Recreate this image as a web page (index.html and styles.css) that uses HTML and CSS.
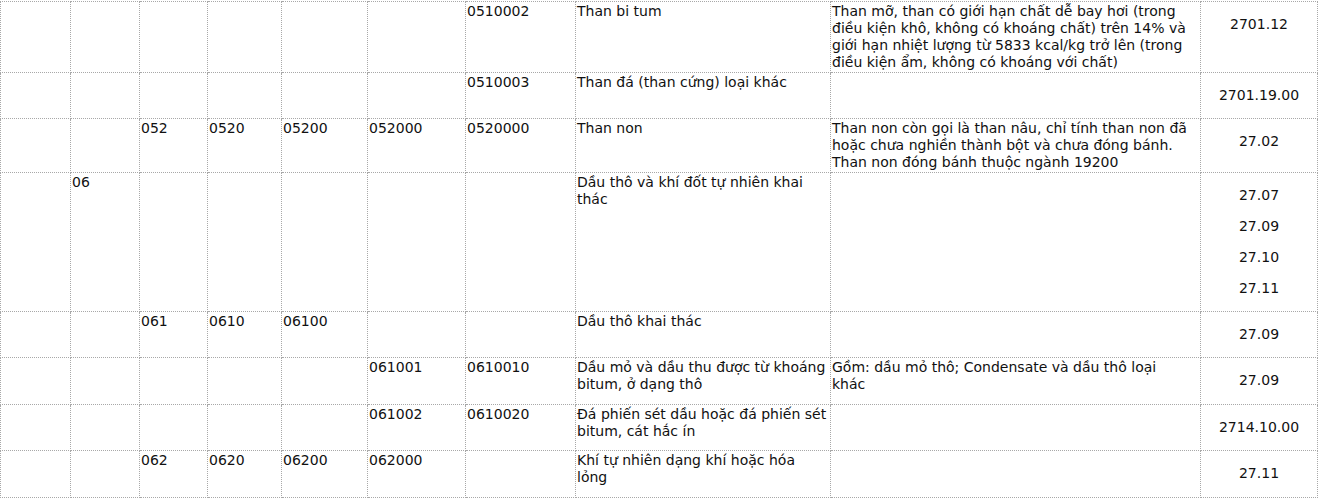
FILE: index.html
```html
<!DOCTYPE html>
<html lang="vi">
<head>
<meta charset="utf-8">
<title>Bảng mã ngành</title>
<link rel="stylesheet" href="styles.css">
</head>
<body>
<div class="page">
<table class="codes">
  <colgroup>
    <col class="c1"><col class="c2"><col class="c3"><col class="c4"><col class="c5">
    <col class="c6"><col class="c7"><col class="c8"><col class="c9"><col class="c10">
  </colgroup>
  <tbody>
    <tr>
      <td></td><td></td><td></td><td></td><td></td><td></td>
      <td>0510002</td>
      <td>Than bi tum</td>
      <td>Than mỡ, than có giới hạn chất dễ bay hơi (trong điều kiện khô, không có khoáng chất) trên 14% và giới hạn nhiệt lượng từ 5833 kcal/kg trở lên (trong điều kiện ẩm, không có khoáng với chất)</td>
      <td class="hs"><p>2701.12</p></td>
    </tr>
    <tr>
      <td></td><td></td><td></td><td></td><td></td><td></td>
      <td>0510003</td>
      <td>Than đá (than cứng) loại khác</td>
      <td></td>
      <td class="hs"><p>2701.19.00</p></td>
    </tr>
    <tr>
      <td></td><td></td>
      <td>052</td><td>0520</td><td>05200</td><td>052000</td><td>0520000</td>
      <td>Than non</td>
      <td>Than non còn gọi là than nâu, chỉ tính than non đã hoặc chưa nghiền thành bột và chưa đóng bánh. Than non đóng bánh thuộc ngành 19200</td>
      <td class="hs"><p>27.02</p></td>
    </tr>
    <tr>
      <td></td>
      <td>06</td>
      <td></td><td></td><td></td><td></td><td></td>
      <td>Dầu thô và khí đốt tự nhiên khai thác</td>
      <td></td>
      <td class="hs"><p>27.07</p><p>27.09</p><p>27.10</p><p>27.11</p></td>
    </tr>
    <tr>
      <td></td><td></td>
      <td>061</td><td>0610</td><td>06100</td><td></td><td></td>
      <td>Dầu thô khai thác</td>
      <td></td>
      <td class="hs"><p>27.09</p></td>
    </tr>
    <tr class="tall">
      <td></td><td></td><td></td><td></td><td></td>
      <td>061001</td><td>0610010</td>
      <td>Dầu mỏ và dầu thu được từ khoáng bitum, ở dạng thô</td>
      <td class="narrow">Gồm: dầu mỏ thô; Condensate và dầu thô loại khác</td>
      <td class="hs"><p>27.09</p></td>
    </tr>
    <tr>
      <td></td><td></td><td></td><td></td><td></td>
      <td>061002</td><td>0610020</td>
      <td>Đá phiến sét dầu hoặc đá phiến sét bitum, cát hắc ín</td>
      <td></td>
      <td class="hs"><p>2714.10.00</p></td>
    </tr>
    <tr class="tall">
      <td></td><td></td>
      <td>062</td><td>0620</td><td>06200</td><td>062000</td><td></td>
      <td>Khí tự nhiên dạng khí hoặc hóa lỏng</td>
      <td></td>
      <td class="hs"><p>27.11</p></td>
    </tr>
  </tbody>
</table>
</div>
</body>
</html>
```

FILE: styles.css
```css
html, body {
  margin: 0;
  padding: 0;
  background: #ffffff;
}

.page {
  padding-top: 1px;
}

.codes {
  border-collapse: collapse;
  table-layout: fixed;
  width: 1317px;
  font-family: "DejaVu Sans", "Liberation Sans", sans-serif;
  font-size: 14px;
  line-height: 17px;
  color: #111111;
}

.c1 { width: 70px; }
.c2 { width: 69px; }
.c3 { width: 68px; }
.c4 { width: 74px; }
.c5 { width: 86px; }
.c6 { width: 98px; }
.c7 { width: 110px; }
.c8 { width: 255px; }
.c9 { width: 370px; }
.c10 { width: 117px; }

.codes td {
  border: 1px dotted #a8a8a8;
  padding: 1px 1px;
  vertical-align: top;
  text-align: left;
}

.codes td.narrow {
  padding-right: 12px;
}

.codes tr.tall td {
  padding-bottom: 2px;
}

.codes td.hs {
  text-align: center;
}

.codes td.hs p {
  margin: 12px 0;
  line-height: 19px;
}
```
